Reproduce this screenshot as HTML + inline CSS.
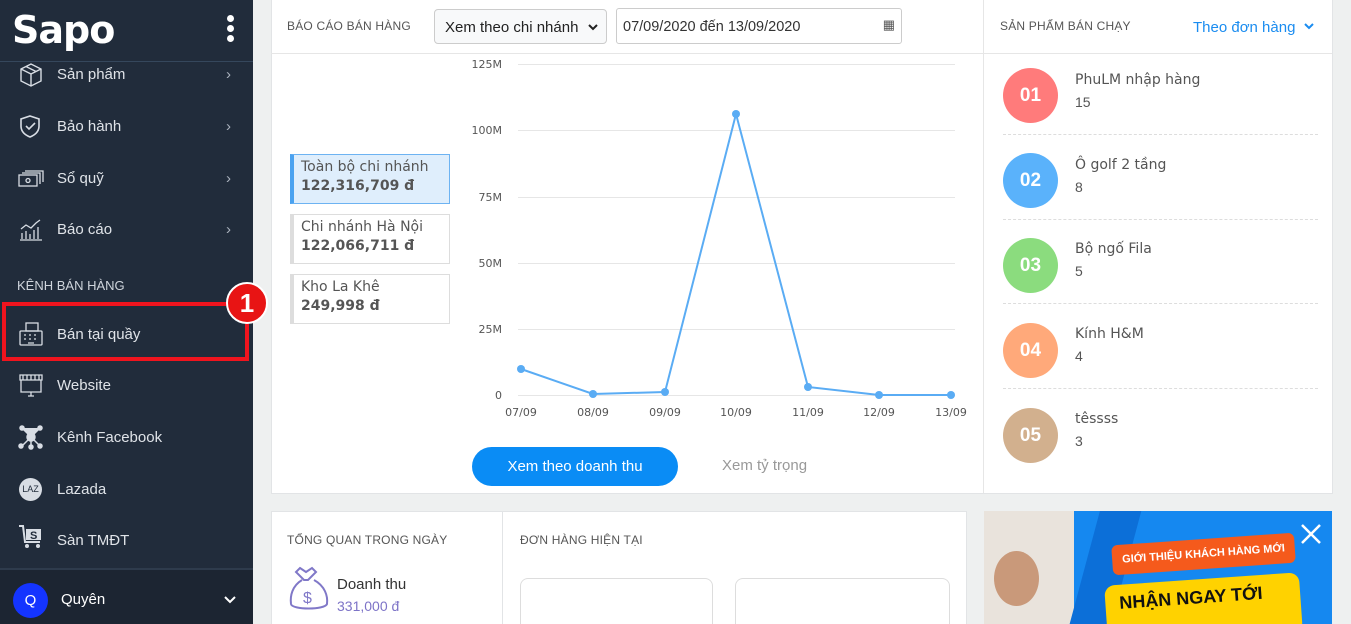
<!DOCTYPE html>
<html style="width:1351px;height:624px;overflow:hidden"><head><meta charset="utf-8"><style>
*{box-sizing:border-box;margin:0;padding:0}
body{width:1351px;height:624px;overflow:hidden;background:#eef0f0;font-family:"Liberation Sans",sans-serif;position:relative}
.sb{position:absolute;left:0;top:0;width:253px;height:624px;background:#212c3b;color:#d8dde4}
.abs{position:absolute}
.item{position:absolute;left:57px;font-size:15px;color:#dfe3e8}
.chev{position:absolute;left:226px;font-size:15px;color:#aab2bd}
.card{position:absolute;background:#fff;border:1px solid #e2e4e6}
.lbl{font-size:12px;color:#555;letter-spacing:.2px}
.br{position:absolute;left:290px;width:160px;height:50px;border:1px solid #ddd;border-left:4px solid #ddd;padding:4px 7px;font-size:14px;color:#555;font-family:"DejaVu Sans",sans-serif}
.br b{display:block;margin-top:3px;font-size:14px}
.circ{position:absolute;left:1003px;width:55px;height:55px;border-radius:50%;color:#fff;font-size:19px;font-weight:bold;text-align:center;line-height:55px}
.pn{position:absolute;left:1075px;font-size:14px;color:#555;font-family:"DejaVu Sans",sans-serif}
.pq{position:absolute;left:1075px;font-size:14px;color:#555}
.dash{position:absolute;left:1003px;width:315px;border-top:1px dashed #ddd}
</style></head><body>
<div class="sb">
 <div class="abs" style="left:12px;top:8px;font-size:38px;font-weight:bold;color:#fff;letter-spacing:-1px;font-family:'DejaVu Sans',sans-serif">Sapo</div>
 <div class="abs" style="left:227px;top:15px;width:7px;height:7px;border-radius:50%;background:#fff;box-shadow:0 10px 0 #fff,0 20px 0 #fff"></div>
 <div class="abs" style="left:0;top:61px;width:253px;border-top:1px solid #35475c"></div>
 <svg class="abs" style="left:18px;top:62px" width="26" height="26" fill="none" stroke="#d8dde4" stroke-width="1.4"><path d="M3 7l10-5 10 5v12l-10 5-10-5z M3 7l10 5 10-5 M13 12v12 M8 4.5l10 5"/></svg>
 <div class="item" style="top:66px">Sản phẩm</div><div class="chev" style="top:66px">›</div>
 <svg class="abs" style="left:18px;top:114px" width="26" height="26" fill="none" stroke="#d8dde4" stroke-width="1.6"><path d="M12 2l9 3v7c0 6-4 9-9 11-5-2-9-5-9-11V5z M8 12l3 3 6-6"/></svg>
 <div class="item" style="top:118px">Bảo hành</div><div class="chev" style="top:118px">›</div>
 <svg class="abs" style="left:18px;top:168px" width="26" height="22" fill="none" stroke="#d8dde4" stroke-width="1.3"><rect x="1" y="7" width="18" height="11"/><path d="M4 5h18v11 M7 3h18v11"/><circle cx="10" cy="12.5" r="2"/></svg>
 <div class="item" style="top:170px">Sổ quỹ</div><div class="chev" style="top:170px">›</div>
 <svg class="abs" style="left:18px;top:216px" width="26" height="26" fill="none" stroke="#d8dde4" stroke-width="1.3"><path d="M2 24h22 M4 23v-6 M8 23v-8 M12 23v-5 M16 23v-9 M20 23v-12 M3 13l5-4 5 3 5-5 4-3"/></svg>
 <div class="item" style="top:221px">Báo cáo</div><div class="chev" style="top:221px">›</div>
 <div class="abs" style="left:17px;top:278px;font-size:13px;color:#cfd5dc">KÊNH BÁN HÀNG</div>
 <svg class="abs" style="left:18px;top:321px" width="26" height="26" fill="none" stroke="#d8dde4" stroke-width="1.3"><rect x="2" y="10" width="22" height="14" rx="1"/><rect x="8" y="2" width="12" height="8"/><path d="M6 14h2M11 14h2M16 14h2M6 18h2M11 18h2M16 18h2M10 22h6"/></svg>
 <div class="item" style="top:326px">Bán tại quầy</div>
 <div class="abs" style="left:2px;top:302px;width:247px;height:59px;border:4px solid #f0141e"></div>
 <div class="abs" style="left:226px;top:282px;width:42px;height:42px;border-radius:50%;background:#e81414;border:2px solid #fff;color:#fff;font-size:26px;font-weight:bold;text-align:center;line-height:38px">1</div>
 <svg class="abs" style="left:18px;top:373px" width="26" height="26" fill="none" stroke="#d8dde4" stroke-width="1.3"><path d="M2 2h22v5H2z M5 2v5M9 2v5M13 2v5M17 2v5M21 2v5 M3 7v12h20V7 M10 23h6 M13 19v4"/></svg>
 <div class="item" style="top:377px">Website</div>
 <svg class="abs" style="left:18px;top:424px" width="26" height="26" fill="#d8dde4" stroke="#d8dde4" stroke-width="1.5"><path d="M4 4l9 9 9-9 M4 22l9-9 M22 22l-9-9 M13 13v9"/><circle cx="13" cy="13" r="4"/><circle cx="4" cy="4" r="2"/><circle cx="22" cy="4" r="2"/><circle cx="3" cy="22" r="2"/><circle cx="22" cy="22" r="2"/><circle cx="13" cy="23" r="2"/></svg>
 <div class="item" style="top:429px">Kênh Facebook</div>
 <div class="abs" style="left:19px;top:478px;width:23px;height:23px;border-radius:50%;background:#d8dde4;color:#212c3b;font-size:9px;line-height:23px;text-align:center">LAZ</div>
 <div class="item" style="top:481px">Lazada</div>
 <svg class="abs" style="left:18px;top:524px" width="26" height="26"><path d="M1 2h4l2 16h15" fill="none" stroke="#d8dde4" stroke-width="2"/><rect x="8" y="5" width="15" height="11" fill="#d8dde4"/><text x="12" y="15" font-size="11" font-weight="bold" fill="#212c3b" font-family="Liberation Sans">S</text><circle cx="9" cy="22" r="2" fill="#d8dde4"/><circle cx="20" cy="22" r="2" fill="#d8dde4"/></svg>
 <div class="item" style="top:532px">Sàn TMĐT</div>
 <div class="abs" style="left:0;top:568px;width:253px;height:56px;background:#1c2532;border-top:2px solid #2e3b4c"></div>
 <div class="abs" style="left:13px;top:583px;width:35px;height:35px;border-radius:50%;background:#1434ff;color:#fff;font-size:15px;text-align:center;line-height:35px">Q</div>
 <div class="abs" style="left:61px;top:591px;font-size:15px;color:#fff">Quyên</div>
 <svg class="abs" style="left:223px;top:595px" width="14" height="10" fill="none" stroke="#fff" stroke-width="2"><path d="M2 2l5 5 5-5"/></svg>
</div>

<div class="card" style="left:271px;top:-2px;width:1062px;height:496px"></div>
<div class="abs" style="left:271px;top:53px;width:712px;border-top:1px solid #e6e6e6"></div>
<div class="abs" style="left:983px;top:0;height:493px;border-left:1px solid #e6e6e6"></div>
<div class="abs" style="left:983px;top:53px;width:349px;border-top:1px solid #e6e6e6"></div>
<div class="abs lbl" style="left:287px;top:19px">BÁO CÁO BÁN HÀNG</div>
<div class="abs" style="left:434px;top:9px;width:173px;height:35px;border:1px solid #ccc;border-radius:4px;background:#f8f9fa;font-size:15px;padding:9px 10px;color:#222">Xem theo chi nhánh
 <svg style="position:absolute;right:8px;top:14px" width="10" height="8" fill="none" stroke="#222" stroke-width="2"><path d="M1 1l4 4 4-4"/></svg></div>
<div class="abs" style="left:616px;top:8px;width:286px;height:36px;border:1px solid #ccc;border-radius:3px;font-size:14.5px;padding:10px 6px;color:#333">07/09/2020 đến 13/09/2020<span style="position:absolute;right:6px;top:8px;font-size:13px;color:#555">▦</span></div>

<div class="br" style="top:154px;background:#dfeefc;border-color:#6db3f2;border-left-color:#4aa2f0">Toàn bộ chi nhánh<b>122,316,709 đ</b></div>
<div class="br" style="top:214px">Chi nhánh Hà Nội<b>122,066,711 đ</b></div>
<div class="br" style="top:274px">Kho La Khê<b>249,998 đ</b></div>

<svg class="abs" style="left:460px;top:55px" width="510" height="370" font-family="DejaVu Sans" font-size="11" fill="#555">
 <g stroke="#e6e6e6"><path d="M58 9.5h437M58 75.5h437M58 142.5h437M58 208.5h437M58 274.5h437M58 340.5h437"/></g>
 <g text-anchor="end"><text x="42" y="13">125M</text><text x="42" y="79">100M</text><text x="42" y="146">75M</text><text x="42" y="212">50M</text><text x="42" y="278">25M</text><text x="42" y="344">0</text></g>
 <g text-anchor="middle"><text x="61" y="361">07/09</text><text x="133" y="361">08/09</text><text x="205" y="361">09/09</text><text x="276" y="361">10/09</text><text x="348" y="361">11/09</text><text x="419" y="361">12/09</text><text x="491" y="361">13/09</text></g>
 <polyline fill="none" stroke="#5aacf4" stroke-width="2" points="61,314 133,339 205,337 276,59 348,332 419,340 491,340"/>
 <g fill="#5aacf4"><circle cx="61" cy="314" r="4"/><circle cx="133" cy="339" r="4"/><circle cx="205" cy="337" r="4"/><circle cx="276" cy="59" r="4"/><circle cx="348" cy="332" r="4"/><circle cx="419" cy="340" r="4"/><circle cx="491" cy="340" r="4"/></g>
</svg>
<div class="abs" style="left:472px;top:447px;width:206px;height:39px;border-radius:20px;background:#0a8cf5;color:#fff;font-size:15px;text-align:center;line-height:39px">Xem theo doanh thu</div>
<div class="abs" style="left:722px;top:457px;font-size:15px;color:#999">Xem tỷ trọng</div>

<div class="abs lbl" style="left:1000px;top:19px">SẢN PHẨM BÁN CHẠY</div>
<div class="abs" style="left:1193px;top:19px;font-size:15px;color:#1a8cf0">Theo đơn hàng</div>
<svg class="abs" style="left:1304px;top:23px" width="10" height="8" fill="none" stroke="#1a8cf0" stroke-width="2"><path d="M1 1l4 4 4-4"/></svg>
<div class="circ" style="top:68px;background:#ff7b7b">01</div><div class="pn" style="top:72px">PhuLM nhập hàng</div><div class="pq" style="top:94px">15</div>
<div class="dash" style="top:134px"></div>
<div class="circ" style="top:153px;background:#5ab2fb">02</div><div class="pn" style="top:157px">Ô golf 2 tầng</div><div class="pq" style="top:179px">8</div>
<div class="dash" style="top:219px"></div>
<div class="circ" style="top:238px;background:#8bdc7e">03</div><div class="pn" style="top:241px">Bộ ngố Fila</div><div class="pq" style="top:263px">5</div>
<div class="dash" style="top:303px"></div>
<div class="circ" style="top:323px;background:#ffa97a">04</div><div class="pn" style="top:326px">Kính H&amp;M</div><div class="pq" style="top:348px">4</div>
<div class="dash" style="top:388px"></div>
<div class="circ" style="top:408px;background:#d2b08e">05</div><div class="pn" style="top:411px">têssss</div><div class="pq" style="top:433px">3</div>

<div class="abs" style="left:271px;top:511px;width:696px;height:113px;background:#fff;border:1px solid #e2e4e6;border-bottom:none"></div>
<div class="abs" style="left:502px;top:512px;height:112px;border-left:1px solid #e2e4e6"></div>
<div class="abs lbl" style="left:287px;top:533px">TỔNG QUAN TRONG NGÀY</div>
<div class="abs lbl" style="left:520px;top:533px">ĐƠN HÀNG HIỆN TẠI</div>
<svg class="abs" style="left:288px;top:566px" width="42" height="48" fill="none" stroke="#8078c8" stroke-width="2"><path d="M12 2l6 4 6-4 4 4-8 8h-4l-8-8z M14 14C4 20 2 30 3 38c1 6 34 6 36 0 1-8-2-18-13-24"/><text x="15" y="37" font-size="16" fill="#8078c8" stroke="none" font-family="Liberation Sans">$</text></svg>
<div class="abs" style="left:337px;top:576px;font-size:15px;color:#333">Doanh thu</div>
<div class="abs" style="left:337px;top:598px;font-size:14px;color:#7d73c7">331,000 đ</div>
<div class="abs" style="left:520px;top:578px;width:193px;height:46px;border:1px solid #ddd;border-bottom:none;border-radius:8px 8px 0 0"></div>
<div class="abs" style="left:735px;top:578px;width:215px;height:46px;border:1px solid #ddd;border-bottom:none;border-radius:8px 8px 0 0"></div>

<div class="abs" style="left:984px;top:511px;width:348px;height:113px;background:#1588f0;overflow:hidden">
 <div class="abs" style="left:0;top:0;width:90px;height:113px;background:#e9e3dc"></div>
 <div class="abs" style="left:10px;top:40px;width:45px;height:55px;border-radius:50%;background:#c9997a"></div>
 <div class="abs" style="left:100px;top:-8px;width:40px;height:140px;background:#0c6fd8;transform:rotate(15deg)"></div>
 <div class="abs" style="left:128px;top:28px;width:183px;height:30px;background:#f55a1c;border-radius:6px;transform:rotate(-4deg);color:#fff;font-size:11px;font-weight:bold;line-height:30px;text-align:center">GIỚI THIỆU KHÁCH HÀNG MỚI</div>
 <div class="abs" style="left:122px;top:68px;width:195px;height:60px;background:#ffd200;border-radius:10px;transform:rotate(-4deg);color:#111;font-size:18px;font-weight:bold;padding:8px 14px">NHẬN NGAY TỚI</div>
 <svg class="abs" style="left:316px;top:12px" width="22" height="22" stroke="#fff" stroke-width="2.5"><path d="M2 2l18 18M20 2L2 20"/></svg>
</div>
</body></html>
